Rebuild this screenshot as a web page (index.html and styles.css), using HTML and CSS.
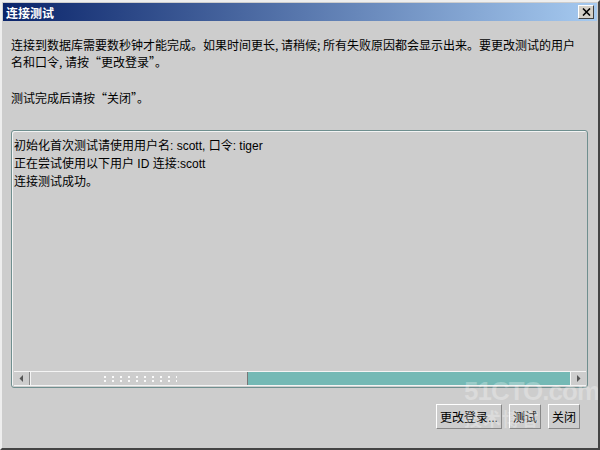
FILE: index.html
```html
<!DOCTYPE html>
<html lang="zh-CN">
<head>
    <meta charset="UTF-8">
    <title>连接测试</title>
    <link rel="stylesheet" href="styles.css">
</head>
<body>
    <div class="window">
        <div class="title-bar">
            <span class="title">连接测试</span>
            <span class="close-btn">
                <svg width="9" height="8" viewBox="0 0 9 8"><path d="M1 0.5 L8 7.5 M8 0.5 L1 7.5" stroke="#000" stroke-width="1.6"/></svg>
            </span>
        </div>
        <div class="content">
            <p class="intro">连接到数据库需要数秒钟才能完成。如果时间更长, 请稍候; 所有失败原因都会显示出来。要更改测试的用户名和口令, 请按“更改登录”。</p>
            <p class="intro">测试完成后请按“关闭”。</p>
            <div class="log">
                <div class="log-text">
                    <div>初始化首次测试请使用用户名: scott, 口令: tiger</div>
                    <div>正在尝试使用以下用户 ID 连接:scott</div>
                    <div>连接测试成功。</div>
                </div>
                <div class="hscroll">
                    <span class="arrow left"><svg width="5" height="7" viewBox="0 0 5 7"><path d="M4 0 L0.5 3.5 L4 7 Z" fill="#555"/></svg></span>
                    <span class="thumb"><span class="grip"></span></span>
                    <span class="track"></span>
                    <span class="arrow right"><svg width="5" height="7" viewBox="0 0 5 7"><path d="M1 0 L4.5 3.5 L1 7 Z" fill="#555"/></svg></span>
                </div>
            </div>
            <div class="buttons">
                <span class="btn">更改登录...</span>
                <span class="btn">测试</span>
                <span class="btn">关闭</span>
            </div>
        </div>
        <div class="watermark">51CTO.com<span>技术博客</span></div>
    </div>
</body>
</html>
```

FILE: styles.css
```css
body {
    margin: 0;
    padding: 0;
    background: #cccccc;
    font-family: "Liberation Sans", "Noto Sans CJK SC", sans-serif;
    font-size: 12px;
    color: #000;
}
.window {
    position: relative;
    width: 600px;
    height: 450px;
    box-sizing: border-box;
    background: #cdcdcd;
    border-top: 2px solid #eeeeee;
    border-left: 2px solid #eeeeee;
    border-right: 2px solid #444444;
    border-bottom: 2px solid #444444;
    padding: 1px 1px 0 1px;
    overflow: hidden;
}
.title-bar {
    height: 18px;
    background: linear-gradient(to right, #0a246a, #a6caf0);
    display: flex;
    align-items: center;
    justify-content: space-between;
    padding: 0 3px 0 3px;
}
.title {
    color: #fff;
    font-weight: bold;
    font-size: 12px;
}
.close-btn {
    width: 16px;
    height: 14px;
    box-sizing: border-box;
    background: #d4d0c8;
    border-top: 1px solid #fff;
    border-left: 1px solid #fff;
    border-right: 1px solid #404040;
    border-bottom: 1px solid #404040;
    display: flex;
    align-items: center;
    justify-content: center;
}
.content {
    padding: 15px 9px 0 8px;
}
.intro {
    margin: 0 12px 19px 0;
    line-height: 17px;
    font-family: "Noto Sans CJK SC", sans-serif;
}
.log {
    margin-top: 24px;
    height: 258px;
    box-sizing: border-box;
    border: 1px solid #6f8f8f;
    border-radius: 3px;
    box-shadow: inset 1px 1px 0 #f4f4f4;
    display: flex;
    flex-direction: column;
    justify-content: space-between;
    padding: 6px 1px 1px 2px;
}
.log-text {
    line-height: 18px;
}
.hscroll {
    height: 15px;
    display: flex;
    box-sizing: border-box;
    border-top: 1px solid #f4f4f4;
    border-bottom: 1px solid #f4f4f4;
}
.arrow {
    width: 15px;
    display: flex;
    align-items: center;
    justify-content: center;
    background: #cdcdcd;
}
.arrow.left {
    border-right: 1px solid #888;
}
.arrow.right {
    border-left: 1px solid #f4f4f4;
}
.thumb {
    width: 218px;
    box-sizing: border-box;
    border-left: 1px solid #f4f4f4;
    border-right: 1px solid #777;
    background: #cdcdcd;
    display: flex;
    align-items: center;
    justify-content: center;
}
.grip {
    width: 76px;
    height: 7px;
    background-image: radial-gradient(circle, #fafafa 0.9px, transparent 1.2px);
    background-size: 8px 4px;
    background-position: 0 0, 4px 2px;
}
.track {
    flex: 1;
    background: #74b9b5;
}
.buttons {
    display: flex;
    justify-content: flex-end;
    gap: 7px;
    margin-top: 16px;
    padding-right: 8px;
}
.btn {
    height: 25px;
    box-sizing: border-box;
    padding: 0 3px;
    display: flex;
    align-items: center;
    border-top: 1px solid #fff;
    border-left: 1px solid #fff;
    border-right: 1px solid #888;
    border-bottom: 1px solid #888;
    background: #cdcdcd;
}
.watermark {
    position: absolute;
    left: 462px;
    top: 374px;
    font-family: "Liberation Sans", sans-serif;
    font-weight: bold;
    font-size: 26px;
    line-height: 30px;
    letter-spacing: -1px;
    color: rgba(255, 255, 255, 0.28);
    pointer-events: none;
}
.watermark span {
    display: block;
    font-family: "Noto Sans CJK SC", sans-serif;
    font-size: 18px;
    letter-spacing: 1px;
    line-height: 24px;
}
```
